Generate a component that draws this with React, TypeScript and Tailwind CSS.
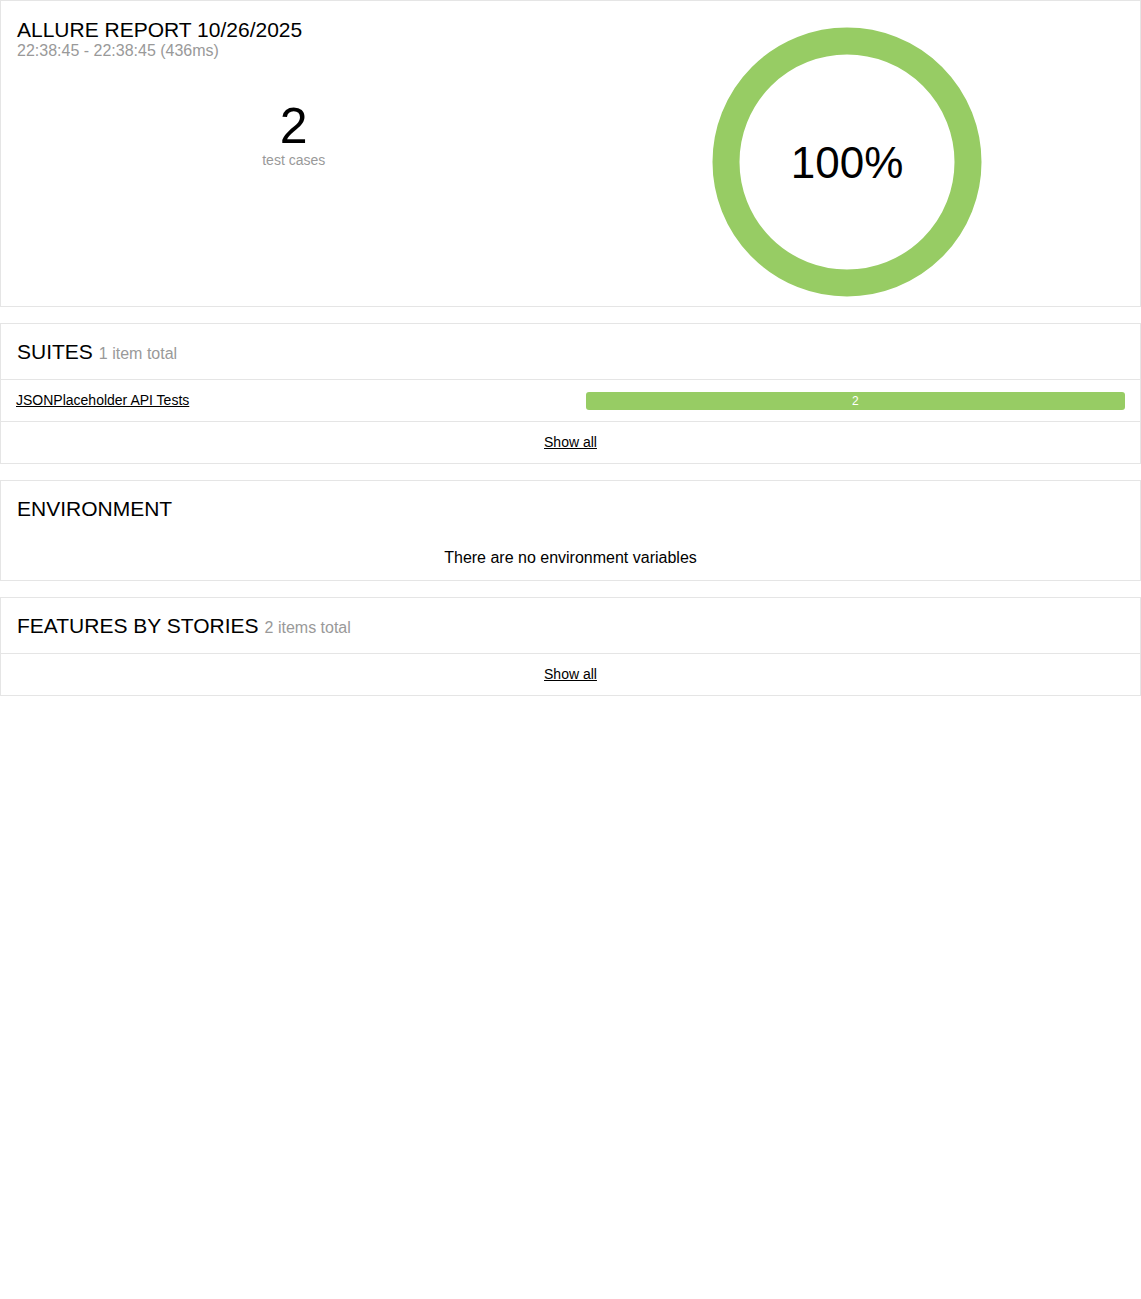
import React from 'react';

const FONT = { fontFamily: '"Liberation Sans", Arial, Helvetica, sans-serif' };

function Card({ children, className = '' }: { children: React.ReactNode; className?: string }) {
  return <div className={`border border-[#e5e5e5] bg-white mb-4 ${className}`}>{children}</div>;
}

function CardHeader({ title, count }: { title: string; count?: string }) {
  return (
    <div className="h-[56px] flex items-center px-4 border-b border-[#e5e5e5]">
      <h2 className="text-[21px] leading-none text-black">
        {title}
        {count && <span className="text-[16px] text-[#999] ml-[6px]">{count}</span>}
      </h2>
    </div>
  );
}

function ShowAll() {
  return (
    <div className="h-[41px] flex items-center justify-center">
      <a className="text-[14px] text-black underline cursor-pointer">Show all</a>
    </div>
  );
}

function Donut() {
  return (
    <svg width="270" height="270" viewBox="0 0 270 270">
      <circle cx="135" cy="135" r="121" fill="none" stroke="#97cc64" strokeWidth="27" />
      <text x="135" y="151" textAnchor="middle" fontSize="44" fill="#000" style={FONT}>
        100%
      </text>
    </svg>
  );
}

export default function App() {
  return (
    <div className="w-[1141px] bg-white text-black" style={FONT}>
      {/* Summary */}
      <Card className="h-[307px]">
        <div className="flex px-4 pt-4">
          <div className="w-1/2">
            <h1 className="text-[21px] leading-[25px]">ALLURE REPORT 10/26/2025</h1>
            <div className="text-[16px] leading-[18px] text-[#999]">22:38:45 - 22:38:45 (436ms)</div>
            <div className="mt-[41px] flex flex-col items-center">
              <div className="text-[50px] leading-none">2</div>
              <div className="text-[14px] leading-[16px] text-[#999] mt-[1px]">test cases</div>
            </div>
          </div>
          <div className="w-1/2 flex justify-center pt-[10px]">
            <Donut />
          </div>
        </div>
      </Card>

      {/* Suites */}
      <Card>
        <CardHeader title="SUITES" count="1 item total" />
        <div className="h-[42px] flex items-center px-[15px] pb-[2px] border-b border-[#e5e5e5]">
          <div className="w-1/2">
            <a className="text-[14px] text-black underline cursor-pointer">JSONPlaceholder API Tests</a>
          </div>
          <div className="w-1/2 pl-[15px] pt-[2px]">
            <div className="h-[18px] rounded-[3px] bg-[#97cc64] flex items-center justify-center text-white text-[12px]">
              2
            </div>
          </div>
        </div>
        <ShowAll />
      </Card>

      {/* Environment */}
      <Card>
        <div className="h-[54px] flex items-center px-4">
          <h2 className="text-[21px] leading-none">ENVIRONMENT</h2>
        </div>
        <div className="h-[45px] flex items-center justify-center text-[16px]">
          There are no environment variables
        </div>
      </Card>

      {/* Features */}
      <Card>
        <CardHeader title="FEATURES BY STORIES" count="2 items total" />
        <ShowAll />
      </Card>
    </div>
  );
}
